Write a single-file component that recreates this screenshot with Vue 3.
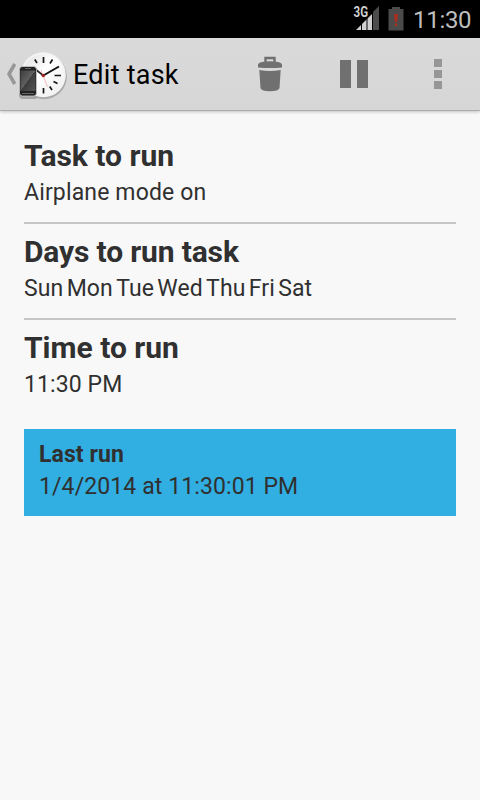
<script setup>
const sections = [
  { title: 'Task to run', cls: 'task', words: ['Airplane mode on'] },
  { title: 'Days to run task', cls: 'days', words: ['Sun', 'Mon', 'Tue', 'Wed', 'Thu', 'Fri', 'Sat'] },
  { title: 'Time to run', cls: 'time', words: ['11:30 PM'] },
]
</script>

<template>
  <div class="screen">
    <header class="status">
      <svg class="signal" width="28" height="26" viewBox="0 0 28 26">
        <path d="M4 25 L20 9 V25Z" fill="#d0d0d0" />
        <path d="M21 7 L27 1 V25H21Z" fill="#4c4c4c" />
        <path d="M9.500 17V25M15 12V25M20.500 6V25" stroke="#000" stroke-width="1" />
        <text x="1.500" y="12" class="net" textLength="14.500" lengthAdjust="spacingAndGlyphs" stroke="#000" stroke-width="1.500" paint-order="stroke">3G</text>
      </svg>
      <svg class="battery" width="16" height="24" viewBox="0 0 16 24">
        <path d="M4 0H12V2H15.500V23.500H.5V2H4Z" fill="#4b4b4b" />
        <path d="M6 7H10L9.200 15H6.800ZM6.800 16.500H9.200V19H6.800Z" fill="#a92e1d" />
      </svg>
      <span class="clock">11:30</span>
    </header>

    <nav class="bar">
      <svg class="back" width="11" height="24" viewBox="0 0 11 24">
        <path d="M9.800 2L4 12L9.800 22" fill="none" stroke="#989898" stroke-width="3.600" />
      </svg>
      <svg class="logo" width="50" height="50" viewBox="0 0 50 50">
        <defs>
          <linearGradient id="face" x1="0" y1="0" x2="1" y2="1">
            <stop offset="0" stop-color="#dedede" />
            <stop offset=".45" stop-color="#fff" />
            <stop offset="1" stop-color="#ededed" />
          </linearGradient>
          <linearGradient id="glass" x1="0" y1="0" x2="1" y2="1">
            <stop offset="0" stop-color="#3c3c3c" />
            <stop offset=".49" stop-color="#606060" />
            <stop offset=".5" stop-color="#3c3c3c" />
            <stop offset="1" stop-color="#555" />
          </linearGradient>
        </defs>
        <circle cx="26" cy="25.400" r="22.800" fill="#a9a9a9" />
        <rect x="1" y="18" width="19.500" height="30" rx="4" fill="#a5a5a5" />
        <circle cx="25.300" cy="23.800" r="22.500" fill="#f4f4f4" />
        <circle cx="25.300" cy="23.800" r="20.500" fill="url(#face)" />
        <path d="M36.500 24.500H43M25.500 6V12M25.500 37V42.500M16.800 8.500L19 12M34.500 8.500L32 12.500M39.500 32.500L35.500 30.500M34 39L31.700 35.500" stroke="#171717" stroke-width="1.700" />
        <path d="M25.300 24.500L41 15.500" stroke="#111" stroke-width="2" />
        <path d="M25.300 24.500L17 18" stroke="#222" stroke-width="1.600" />
        <path d="M23 19L29.500 36" stroke="#efaaaa" stroke-width=".8" />
        <circle cx="25.300" cy="24.500" r="1.800" fill="#9e2323" />
        <rect x="1.500" y="15.500" width="17" height="29.500" rx="3" fill="#222" stroke="#ccc" stroke-width=".8" />
        <rect x="2.500" y="19.500" width="15" height="20.500" fill="url(#glass)" />
        <path d="M7 17.500H13M4 42.500H16" stroke="#666" stroke-width="1" />
      </svg>
      <h1>Edit task</h1>
      <svg class="trash" width="26" height="36" viewBox="0 0 26 36">
        <path d="M8.500 6V2H17.500V6" fill="none" stroke="#707070" stroke-width="2.400" />
        <path d="M1 11.500V9Q1 7 5 6Q13 4.500 21 6Q25 7 25 9V11.500Q13 12.500 1 11.500Z" fill="#707070" />
        <path d="M2.300 14Q13 16 23.700 14L22.500 32Q21.500 35.300 13 35.300Q4.500 35.300 3.500 32Z" fill="#707070" />
      </svg>
      <div class="pause"><i></i><i></i></div>
      <div class="more"><i></i><i></i><i></i></div>
    </nav>

    <main>
      <section v-for="s in sections" :key="s.title" :class="s.cls">
        <h2>{{ s.title }}</h2>
        <p><span v-for="w in s.words" :key="w">{{ w }}</span></p>
      </section>
      <aside>
        <h3>Last run</h3>
        <p>1/4/2014 at 11:30:01 PM</p>
      </aside>
    </main>
  </div>
</template>

<style>
body { background: #f8f8f8; }
</style>

<style scoped>
.screen { width: 480px; height: 800px; overflow: hidden; background: #f8f8f8; color: #303030; font-family: Roboto, "Liberation Sans", sans-serif; }
h1, h2, h3, p { margin: 0; white-space: nowrap; }
svg { display: block; flex: none; }
.status { height: 38px; box-sizing: border-box; background: #000; display: flex; align-items: flex-start; padding-left: 352px; }
.signal { margin-top: 5px; }
.net { font: 700 14px Roboto, sans-serif; fill: #d0d0d0; }
.battery { margin: 7px 0 0 8px; }
.clock { margin: 5px 0 0 9px; font-size: 24px; line-height: 30px; color: #bebebe; letter-spacing: -0.3px; }
.bar { height: 73px; box-sizing: border-box; display: flex; align-items: flex-start; background: linear-gradient(#dadada, #d6d6d6); border-bottom: 1px solid #acacac; box-shadow: 0 1px 3px rgba(0, 0, 0, .22); padding-left: 5px; }
.back { margin-top: 24px; }
.logo { margin: 13px 0 0 2px; }
h1 { margin-left: 5px; width: 184px; font-size: 27px; line-height: 74px; letter-spacing: .25px; font-weight: 400; color: #000; }
.trash { margin-top: 18px; }
.pause { display: flex; gap: 6px; margin: 22px 0 0 57px; }
.pause i { width: 11px; height: 28px; background: #707070; }
.more { display: grid; gap: 3px; margin: 21px 0 0 66px; }
.more i { width: 8px; height: 8px; background: #969696; }
main { padding: 17px 24px 0; }
section { height: 96px; box-sizing: border-box; padding-top: 9px; border-bottom: 2px solid #c6c6c6; }
section.time { border-bottom: 0; }
h2 { font-size: 30px; line-height: 38px; font-weight: 700; }
.days h2 { letter-spacing: -0.15px; }
p { font-size: 23px; line-height: 34px; font-weight: 400; letter-spacing: .1px; }
section p { display: flex; gap: 4px; line-height: 36px; }
.task p { letter-spacing: .15px; }
.days p { gap: 3.300px; }
aside { margin-top: 13px; height: 87px; box-sizing: border-box; padding: 10px 15px; background: #31aee2; }
h3 { font-size: 23px; line-height: 31px; font-weight: 700; letter-spacing: .1px; }
</style>
